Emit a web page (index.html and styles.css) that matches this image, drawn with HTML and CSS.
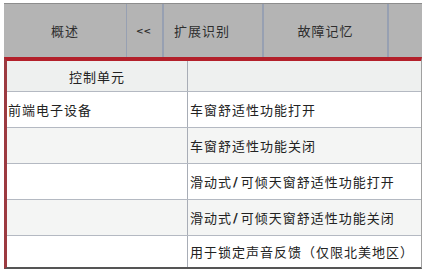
FILE: index.html
```html
<!DOCTYPE html>
<html lang="zh">
<head>
<meta charset="utf-8">
<link rel="stylesheet" href="styles.css">
</head>
<body>
<div class="screen">
  <nav class="tabs">
    <div class="tab t1">概述</div>
    <div class="tab t2">&lt;&lt;</div>
    <div class="tab t3">扩展识别</div>
    <div class="tab t4">故障记忆</div>
    <div class="tab t5"></div>
  </nav>
  <div class="panel">
    <div class="row head">
      <div class="cell c1 center">控制单元</div>
      <div class="cell c2"></div>
    </div>
    <div class="row">
      <div class="cell c1">前端电子设备</div>
      <div class="cell c2">车窗舒适性功能打开</div>
    </div>
    <div class="row alt">
      <div class="cell c1"></div>
      <div class="cell c2">车窗舒适性功能关闭</div>
    </div>
    <div class="row">
      <div class="cell c1"></div>
      <div class="cell c2">滑动式<b class="slash">/</b>可倾天窗舒适性功能打开</div>
    </div>
    <div class="row alt">
      <div class="cell c1"></div>
      <div class="cell c2">滑动式<b class="slash">/</b>可倾天窗舒适性功能关闭</div>
    </div>
    <div class="row last">
      <div class="cell c1"></div>
      <div class="cell c2">用于锁定声音反馈（仅限北美地区）</div>
    </div>
  </div>
</div>
</body>
</html>
```
FILE: styles.css
```css
html, body {
  margin: 0;
  padding: 0;
  background: #ffffff;
}
body {
  font-family: "Noto Sans CJK SC", "Noto Sans", sans-serif;
  font-size: 13px;
  color: #222;
}
.screen {
  padding: 3px 0 0 4px;
  width: 418px;
}
.tabs {
  display: grid;
  grid-template-columns: 123px 37px 100px 125px 33px;
  height: 53px;
  border-top: 1px solid #8d8d8d;
  background: #b4b4b4;
}
.tab {
  display: flex;
  align-items: center;
  justify-content: center;
  color: #2e2e2e;
  letter-spacing: 1px;
  border-right: 2px solid #97a0b2;
}
.tab.t1 { border-right-width: 1px; }
.tab.t2 {
  font-family: "DejaVu Sans", sans-serif;
  font-weight: bold;
  font-size: 9px;
  letter-spacing: 0;
  padding-right: 2px;
}
.tab.t3 { justify-content: flex-start; padding-left: 10px; }
.tab.t5 { border-right: none; }
.panel {
  border-top: 4px solid #b3202a;
  border-left: 3px solid #9c3a40;
  border-right: 1px solid #a0a0a0;
  border-bottom: 2px solid #555;
  width: 414px;
}
.row {
  display: grid;
  grid-template-columns: 180px 1fr;
  height: 35px;
  border-bottom: 1px solid #b4b9c2;
  background: #ffffff;
}
.row.head {
  height: 30px;
  background: #eef0ef;
}
.row.alt { background: #f4f5f4; }
.row.last { border-bottom: none; height: 31px; }
.cell {
  display: flex;
  align-items: center;
  letter-spacing: 1px;
  white-space: nowrap;
}
.c1 { padding-left: 1px; }
.c2 {
  border-left: 1px solid #a8adb6;
  padding-left: 2px;
}
.center { justify-content: center; padding-left: 0; }
.slash {
  font-family: "DejaVu Sans", sans-serif;
  font-weight: bold;
  margin: 0 2px 0 1px;
}
```
